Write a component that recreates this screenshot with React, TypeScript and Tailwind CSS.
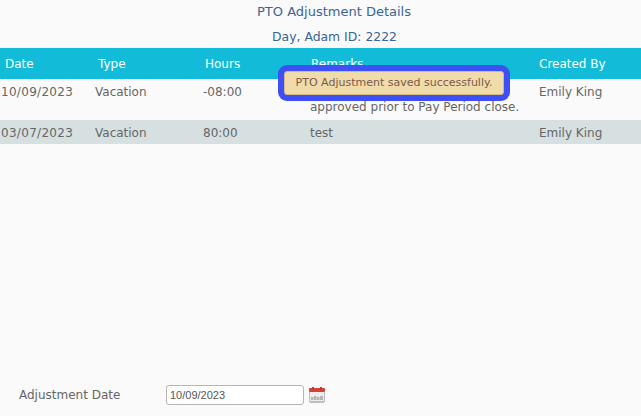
const font = { fontFamily: '"DejaVu Sans", sans-serif' };

function CalendarIcon() {
  return (
    <svg width="18" height="18" viewBox="0 0 18 18" className="shrink-0">
      <rect x="1" y="2" width="16" height="15" rx="2" fill="#bdbdbd" />
      <rect x="2" y="6" width="14" height="9" fill="#ededed" />
      <rect x="1" y="2" width="16" height="4" rx="1" fill="#d9403a" />
      <rect x="4" y="1" width="2" height="3" fill="#b5423c" />
      <rect x="12" y="1" width="2" height="3" fill="#b5423c" />
      <path d="M3 14v-3h2.500v3zM6 14v-4h2.500v4zM9 14v-3h2.500v3zM12 14v-4h3v4z" fill="#b4b4b4" />
    </svg>
  );
}

function Row({ cells, className }: { cells: React.ReactNode[]; className: string }) {
  return (
    <div className={`grid grid-cols-[95px_108px_107px_229px_102px] ${className}`}>
      {cells.map((c, i) => (
        <div key={i} className={i === 0 ? "pl-px tracking-[0.3px]" : ""}>
          {c}
        </div>
      ))}
    </div>
  );
}

export default function App() {
  return (
    <div
      style={font}
      className="relative flex h-[416px] w-[641px] flex-col overflow-hidden bg-[#fafafa] text-[12px] text-[#666666]"
    >
      <div className="flex h-[24px] items-center justify-center pl-[27px] text-[13px] text-[#3a6496]">
        PTO Adjustment Details
      </div>
      <div className="flex h-[24px] items-center justify-center pl-[28px] pt-[2px] text-[12.400px] text-[#3a6496]">
        Day, Adam ID: 2222
      </div>
      <div className="grid h-[31px] grid-cols-[98px_107px_106px_228px_102px] items-center bg-[#12bcd8] text-white">
        <div className="pl-[5px]">Date</div>
        <div>Type</div>
        <div>Hours</div>
        <div>Remarks</div>
        <div>Created By</div>
      </div>
      <Row
        className="h-[41px] pt-[6px] leading-[15px]"
        cells={[
          "10/09/2023",
          "Vacation",
          "-08:00",
          <span className="block">
            &nbsp;
            <br />
            approved prior to Pay Period close.
          </span>,
          "Emily King",
        ]}
      />
      <Row
        className="h-[24px] items-center bg-[#d7e0e1] pt-[1px]"
        cells={["03/07/2023", "Vacation", "80:00", "test", "Emily King"]}
      />
      <div className="flex-1" />
      <div className="mb-[11px] flex h-[20px] items-center pl-[19px]">
        <label className="w-[147px]">Adjustment Date</label>
        <input
          readOnly
          value="10/09/2023"
          className="h-[20px] w-[138px] rounded-[3px] border border-[#b5b5b5] bg-white px-[3px] text-[11px] text-[#555555] outline-none"
          style={{ fontFamily: '"Liberation Sans", sans-serif' }}
        />
        <div className="ml-[4px]">
          <CalendarIcon />
        </div>
      </div>

      <div className="absolute left-[278px] top-[65px] flex h-[36px] w-[232px] items-center justify-center rounded-[9px] bg-[#3d4ff5] p-[6px]">
        <div className="flex h-full w-full items-center justify-center rounded-[3px] border border-[#d5b988] bg-[#f0dbaa] text-[11px] text-[#7a5a4a]">
          PTO Adjustment saved successfully.
        </div>
      </div>
    </div>
  );
}
